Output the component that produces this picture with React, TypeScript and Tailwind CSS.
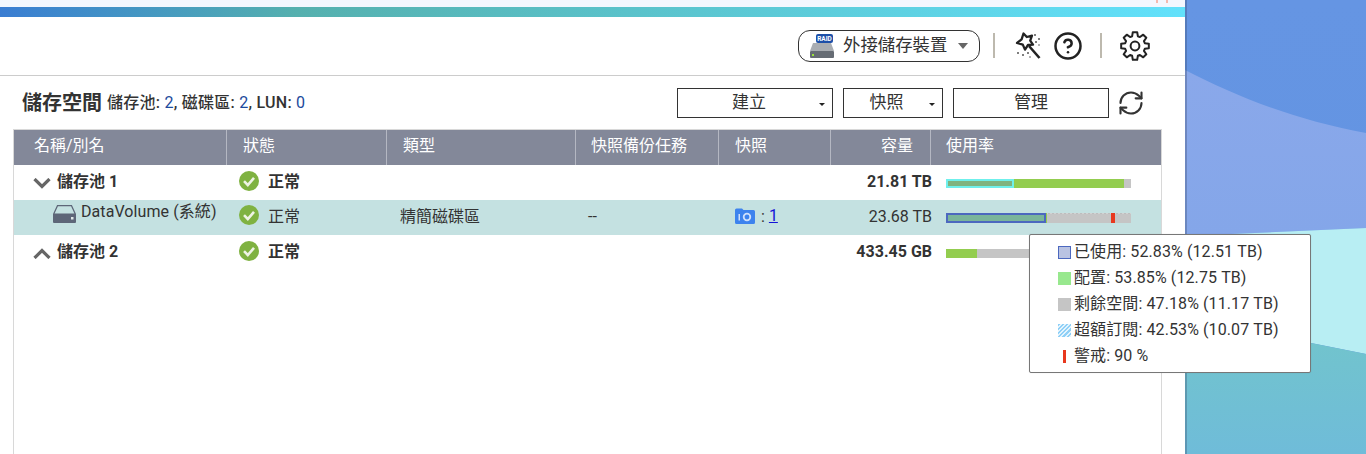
import React from "react";
import { CircleHelp, RefreshCw } from "lucide-react";

const FONT = "font-['Roboto','Noto_Sans_CJK_TC',sans-serif]";
const GRID = "grid grid-cols-[213px_160px_189px_143px_112px_100px_1fr]";

function gearPath(cx: number, cy: number, ro: number, ri: number, n: number) {
  const pts: string[] = [];
  for (let i = 0; i < n; i++) {
    const a = (i / n) * Math.PI * 2 - Math.PI / 2;
    const w = Math.PI / n;
    const p = (r: number, t: number) => `${(cx + r * Math.cos(t)).toFixed(2)} ${(cy + r * Math.sin(t)).toFixed(2)}`;
    pts.push(`${i === 0 ? "M" : "L"}${p(ri, a - w * 0.72)}`);
    pts.push(`L${p(ro, a - w * 0.4)}`);
    pts.push(`L${p(ro, a + w * 0.4)}`);
    pts.push(`L${p(ri, a + w * 0.72)}`);
  }
  return pts.join(" ") + "Z";
}

function Gear() {
  return (
    <svg width="30" height="30" viewBox="0 0 30 30" fill="none" stroke="#222" strokeWidth="2" strokeLinejoin="round">
      <path d={gearPath(15, 15, 14, 10.2, 8)} />
      <circle cx="15" cy="15" r="4.4" />
    </svg>
  );
}

function Wand() {
  return (
    <svg width="27" height="28" viewBox="0 0 27 28" fill="none" stroke="#222" strokeWidth="2.3" strokeLinejoin="round">
      <path d="M8.5 1.5 L11.8 5 L17 3.6 L15.2 8.6 L18 12.6 L13 13 L10 17.6 L7.8 12.6 L2 11 L6.6 7.4 Z" />
      <path d="M14 14 L24.5 26" strokeWidth="2.6" />
      <g fill="#555" stroke="none">
        <circle cx="20" cy="3" r="1" /><circle cx="24" cy="7" r="1" /><circle cx="21" cy="10" r="1" /><circle cx="24" cy="13" r=".8" />
        <circle cx="3" cy="21" r="1" /><circle cx="8" cy="23" r="1" /><circle cx="13" cy="21" r="1" /><circle cx="15" cy="25" r=".8" />
      </g>
    </svg>
  );
}

function RaidDrive() {
  return (
    <svg width="26" height="24" viewBox="0 0 26 24">
      <path d="M4 9 L22 9 L25 17 L1 17 Z" fill="#a9adb2" />
      <rect x="1" y="17" width="24" height="7" rx="1" fill="#666c74" />
      <rect x="3" y="20" width="2" height="2" fill="#9be33c" />
      <rect x="7" y="0" width="17" height="9" rx="2" fill="#1d4fa8" />
      <text x="15.5" y="7" textAnchor="middle" fontSize="6.5" fontWeight="700" fill="#fff" fontFamily="Roboto, sans-serif">RAID</text>
    </svg>
  );
}

function Check() {
  return (
    <svg width="20" height="20" viewBox="0 0 20 20">
      <circle cx="10" cy="10" r="10" fill="#7fb241" />
      <path d="M5 10.2 L8.8 14 L15 6.8" fill="none" stroke="#eef3e4" strokeWidth="2.6" />
    </svg>
  );
}

function Chevron({ up }: { up?: boolean }) {
  return (
    <svg width="18" height="11" viewBox="0 0 18 11" fill="none" stroke="#666" strokeWidth="3.2">
      <path d={up ? "M1.5 10 L9 2.5 L16.5 10" : "M1.5 1 L9 8.5 L16.5 1"} />
    </svg>
  );
}

function Disk() {
  return (
    <svg width="23" height="18" viewBox="0 0 23 18">
      <path d="M4.5 .7 L18.5 .7 L22.3 9 L.7 9 Z" fill="none" stroke="#5d6678" strokeWidth="1.2" />
      <path d="M0 9 H23 V17 a1 1 0 0 1 -1 1 H1 a1 1 0 0 1 -1 -1 Z" fill="#5d6678" />
      <rect x="18" y="12" width="2.5" height="2.5" fill="#dfe8e8" />
    </svg>
  );
}

function Camera() {
  return (
    <svg width="20" height="16" viewBox="0 0 20 16">
      <path d="M0 2 a1.5 1.5 0 0 1 1.5 -1.5 H7 L8.5 2 H18.5 a1.5 1.5 0 0 1 1.5 1.5 V14.5 a1.5 1.5 0 0 1 -1.5 1.5 H1.5 A1.5 1.5 0 0 1 0 14.5 Z" fill="#3d83ee" />
      <rect x="3.5" y="6" width="1.5" height="6.5" fill="#cfe0fb" />
      <circle cx="12" cy="9" r="3.3" fill="none" stroke="#cfe0fb" strokeWidth="1.8" />
    </svg>
  );
}

function SelectButton({ label, width, center }: { label: string; width: string; center: string }) {
  return (
    <div className={`relative flex h-[30px] items-center justify-center border border-[#333] bg-white text-[17px] text-[#333] ${width}`}>
      <span className={center}>{label}</span>
      <span className="absolute right-[7px] top-[14px] h-0 w-0 border-x-[3px] border-t-[3px] border-x-transparent border-t-[#222]" />
    </div>
  );
}

function Bar({ children, h = "h-[9px]" }: { children: React.ReactNode; h?: string }) {
  return <div className={`relative w-[185px] bg-[#c5c5c5] ${h}`}>{children}</div>;
}

function Legend({ swatch, text }: { swatch: React.ReactNode; text: string }) {
  return (
    <div className="flex h-[26px] items-center">
      <span className="flex w-[13px] justify-center">{swatch}</span>
      <span className="ml-[3px] tracking-[0.1px]">{text}</span>
    </div>
  );
}

const headers = ["名稱/別名", "狀態", "類型", "快照備份任務", "快照", "容量", "使用率"];
const headerPad = ["pl-[20px]", "pl-[16px]", "pl-[16px]", "pl-[15px]", "pl-[16px]", "pr-[17px] text-right", "pl-[15px]"];

export default function App() {
  return (
    <div className={`relative flex h-[454px] w-[1366px] overflow-hidden ${FONT}`}>
      <div className="flex w-[1185px] shrink-0 flex-col bg-white text-[#333]">
        <div className="relative h-[7px] bg-[#f3f7fe]">
          <span className="absolute left-[1156px] top-0 h-[3px] w-[2px] bg-[#f4b9ae]" />
          <span className="absolute left-[1166px] top-0 h-[3px] w-[2px] bg-[#f4b9ae]" />
        </div>
        <div className="h-[10px] bg-gradient-to-r from-[#3a7dd2] via-[#55b0ae] via-25% to-[#62e1fb]" />

        <div className="flex h-[59px] items-center justify-end border-b border-[#cccccc] pr-[35px] pb-[1px]">
          <div className="flex h-[32px] w-[182px] items-center rounded-[12px] border border-[#333] pl-[10px] text-[17.4px] text-[#333]">
            <RaidDrive />
            <span className="ml-[8px]">外接儲存裝置</span>
            <span className="ml-[11px] h-0 w-0 border-x-[5px] border-t-[6px] border-x-transparent border-t-[#666]" />
          </div>
          <div className="ml-[13px] h-[25px] w-[2px] bg-[#bdb9ae]" />
          <div className="ml-[20px] flex"><Wand /></div>
          <div className="ml-[11px] flex"><CircleHelp size={30} strokeWidth={2} color="#222" /></div>
          <div className="ml-[17px] h-[25px] w-[2px] bg-[#bdb9ae]" />
          <div className="ml-[18px] flex"><Gear /></div>
        </div>

        <div className="flex h-[53px] items-center pl-[22px]">
          <span className="text-[20px] leading-none font-bold text-[#333]">儲存空間</span>
          <span className="ml-[5px] text-[16px] font-medium tracking-[0.25px] text-[#333]">
            儲存池: <span className="font-normal text-[#1c4a9c]">2</span>, 磁碟區: <span className="font-normal text-[#1c4a9c]">2</span>, LUN: <span className="font-normal text-[#1c4a9c]">0</span>
          </span>
          <div className="ml-auto flex items-center pr-[40px]">
            <SelectButton label="建立" width="w-[156px]" center="mr-[12px]" />
            <div className="w-[10px]" />
            <SelectButton label="快照" width="w-[100px]" center="mr-[13px]" />
            <div className="w-[10px]" />
            <div className="flex h-[30px] w-[156px] items-center justify-center border border-[#333] text-[17px]">管理</div>
            <div className="ml-[8px] flex"><RefreshCw size={28} strokeWidth={1.8} color="#333" /></div>
          </div>
        </div>

        <div className="ml-[13px] flex w-[1149px] flex-1 flex-col border-x border-t border-[#d8d8d8] text-[16px]">
          <div className={`${GRID} h-[35px] bg-[#838899] leading-[31px] text-white`}>
            {headers.map((h, i) => (
              <div key={h} className={`${headerPad[i]} ${i < 6 ? "border-r border-[#b4b7c2]" : ""}`}>{h}</div>
            ))}
          </div>

          <div className={`${GRID} h-[35px] items-start font-bold`}>
            <div className="flex items-start pl-[19px] pt-[5px]"><span className="mt-[8px] flex"><Chevron /></span><span className="ml-[6px]">儲存池 1</span></div>
            <div className="flex items-start pl-[12px] pt-[5px]"><span className="mt-[1px] flex"><Check /></span><span className="ml-[9px]">正常</span></div>
            <div /><div /><div />
            <div className="mr-[-1px] pt-[5px] text-right">21.81 TB</div>
            <div className="pl-[15px] pt-[14px]">
              <Bar>
                <div className="absolute inset-y-0 left-0 w-[178px] bg-[#93cd4f]" />
                <div className="absolute inset-y-0 left-0 w-[68px] border-2 border-[#6ff0ec] bg-[#7fb37f]" />
              </Bar>
            </div>
          </div>

          <div className={`${GRID} h-[35px] items-start bg-[#c4e1e1]`}>
            <div className="flex items-start pl-[39px]">
              <span className="mt-[5px] flex"><Disk /></span>
              <span className="ml-[5px] tracking-[0.08px]">DataVolume (系統)</span>
            </div>
            <div className="flex items-start pl-[12px] pt-[5px]"><span className="flex"><Check /></span><span className="ml-[9px]">正常</span></div>
            <div className="pl-[13px] pt-[5px]">精簡磁碟區</div>
            <div className="pl-[12px] pt-[5px]">--</div>
            <div className="flex items-start pl-[16px] pt-[5px]">
              <span className="mt-[3px] flex"><Camera /></span>
              <span className="ml-[6px]">:</span>
              <span className="ml-[4px] mt-[-1px] text-[#1414d8] underline">1</span>
            </div>
            <div className="mr-[-1px] pt-[5px] text-right">23.68 TB</div>
            <div className="pl-[15px] pt-[13px]">
              <Bar h="h-[10px]">
                <div className="absolute inset-x-0 top-0 h-[1px] bg-[repeating-linear-gradient(90deg,#d2d2d2_0,#d2d2d2_2px,#bdbdbd_2px,#bdbdbd_4px)]" />
                <div className="absolute inset-y-0 left-0 w-[101px] bg-[#93cd4f]" />
                <div className="absolute inset-y-0 left-0 w-[100px] border-2 border-[#4c68bf] bg-[#7ab59b]" />
                <div className="absolute inset-y-0 left-[165px] w-[4px] bg-[#e8381e]" />
              </Bar>
            </div>
          </div>

          <div className={`${GRID} h-[35px] items-start font-bold`}>
            <div className="flex items-start pl-[19px] pt-[5px]"><span className="mt-[8px] flex"><Chevron up /></span><span className="ml-[6px]">儲存池 2</span></div>
            <div className="flex items-start pl-[12px] pt-[5px]"><span className="mt-[1px] flex"><Check /></span><span className="ml-[9px]">正常</span></div>
            <div /><div /><div />
            <div className="mr-[-1px] pt-[5px] text-right">433.45 GB</div>
            <div className="pl-[15px] pt-[14px]">
              <Bar>
                <div className="absolute inset-y-0 left-0 w-[31px] bg-[#93cd4f]" />
              </Bar>
            </div>
          </div>
        </div>
      </div>

      <div className="relative flex-1 bg-[#6ebed9]">
        <svg className="h-full w-full" viewBox="0 0 181 454" preserveAspectRatio="none">
          <defs>
            <linearGradient id="bl" x1="0" y1="0" x2="0" y2="1">
              <stop offset="0" stopColor="#6595e3" /><stop offset="1" stopColor="#6293e1" />
            </linearGradient>
            <linearGradient id="mid" x1="0" y1="0" x2="0" y2="1">
              <stop offset="0" stopColor="#8aa8ea" /><stop offset="1" stopColor="#84a6e9" />
            </linearGradient>
            <linearGradient id="low" x1="0" y1="0" x2="0" y2="1">
              <stop offset="0" stopColor="#72c5cb" /><stop offset="1" stopColor="#6fbcd9" />
            </linearGradient>
          </defs>
          <rect width="181" height="454" fill="url(#bl)" />
          <path d="M0 70 C50 96 110 120 181 133 V228 L0 236 Z" fill="url(#mid)" />
          <path d="M0 236 L181 228 V354 L126 343 L0 320 Z" fill="#b8eef3" />
          <path d="M0 320 L126 343 L181 354 V454 H0 Z" fill="url(#low)" />
        </svg>
        <div className="absolute inset-y-0 left-0 w-[2px] bg-[#33405f]/30" />
      </div>

      <div className="absolute left-[1029px] top-[234px] h-[139px] w-[282px] rounded-[2px] border border-[#777] bg-white pl-[28px] pt-[4px] text-[16px] text-[#333] shadow-[0_0_1px_rgba(0,0,0,0.2)]">
        <Legend swatch={<span className="block h-[13px] w-[13px] border border-[#4c68bf] bg-[#b9c3e2]" />} text="已使用: 52.83% (12.51 TB)" />
        <Legend swatch={<span className="block h-[13px] w-[13px] bg-[#98e88e]" />} text="配置: 53.85% (12.75 TB)" />
        <Legend swatch={<span className="block h-[13px] w-[13px] bg-[#c5c5c5]" />} text="剩餘空間: 47.18% (11.17 TB)" />
        <Legend swatch={<span className="block h-[13px] w-[13px] bg-[repeating-linear-gradient(135deg,#8fd0f7_0,#8fd0f7_1.5px,#e4f4fd_1.5px,#e4f4fd_3px)]" />} text="超額訂閱: 42.53% (10.07 TB)" />
        <Legend swatch={<span className="block h-[13px] w-[3px] bg-[#e8381e]" />} text="警戒: 90 %" />
      </div>
    </div>
  );
}
